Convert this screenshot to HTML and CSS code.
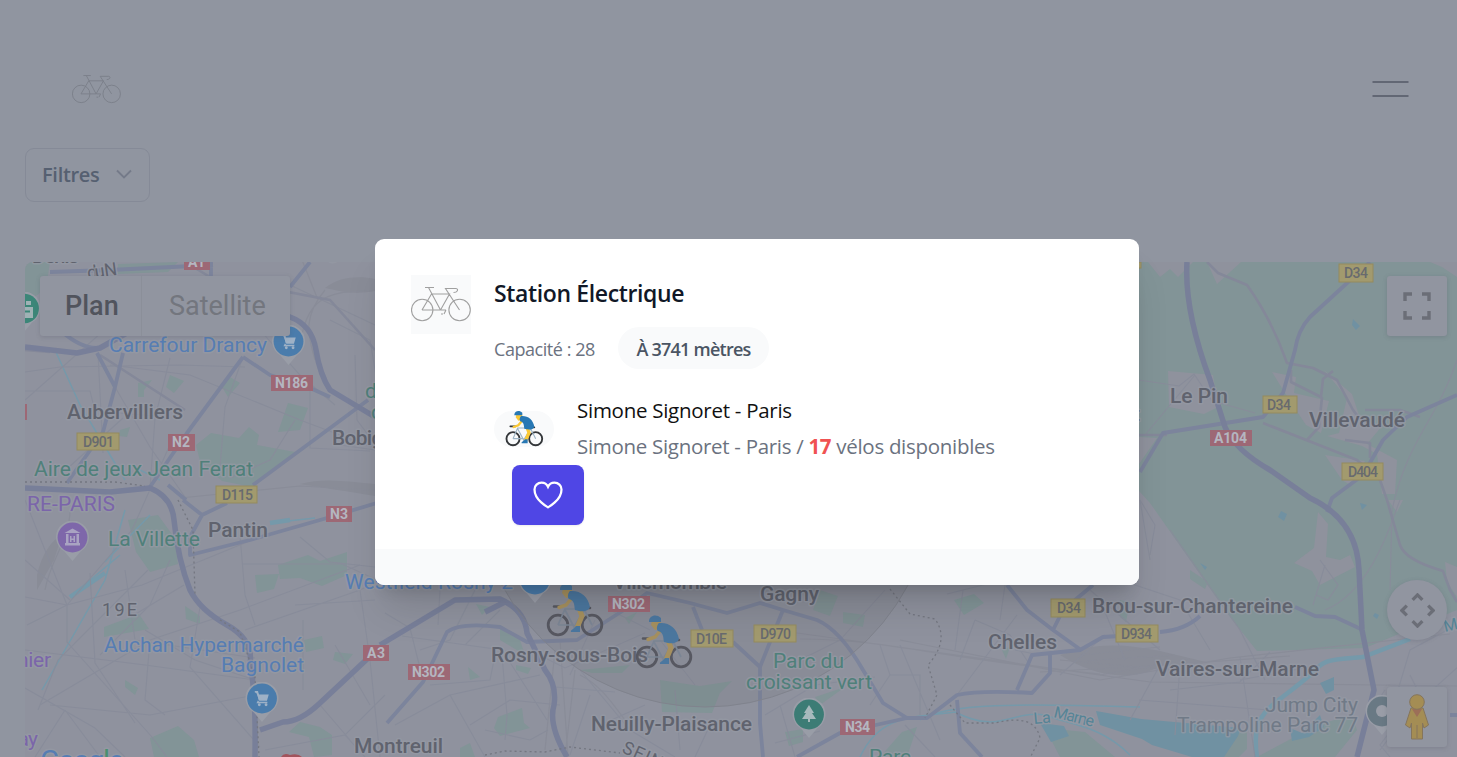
FILE: index.html
```html
<!DOCTYPE html>
<html lang="fr">
<head>
<meta charset="utf-8">
<title>Stations</title>
<link rel="stylesheet" href="styles.css">
</head>
<body>
<svg class="defs" width="0" height="0" aria-hidden="true">
  <symbol id="bike" viewBox="0 0 60 36">
    <g fill="none" stroke="currentColor" stroke-width="1.1">
      <circle cx="11.2" cy="24" r="10.7"/><circle cx="48.6" cy="24" r="10.7"/>
      <path d="M11 24L20.500 8H38.500L29.500 24H11M29.500 24L17.500 1.500M14 1.500H23M48.500 24L34.500 2.500H45C48 3 46.500 6.500 42.500 6.500M30 24h5M32 28h-2M35 24l-2 4"/>
    </g>
  </symbol>
  <symbol id="rider" viewBox="0 0 60 60">
    <g fill="none" stroke="var(--tyre)" stroke-width="2.800"><circle cx="12" cy="43" r="9.800"/><circle cx="46" cy="43" r="9.800"/></g>
    <path d="M12 43L19 27H38L46 43M38 29L28 45L19 28M12 43H28" fill="none" stroke="var(--frame)" stroke-width="1.700"/>
    <path d="M8 24.500h8M35 26h9" stroke="var(--tyre)" stroke-width="2.600" stroke-linecap="round"/>
    <path d="M17 7h9l-1 8-5 1-4-5z" fill="var(--skin)"/>
    <path d="M25 17L20 23L13 25.500" fill="none" stroke="var(--skin)" stroke-width="3.500" stroke-linecap="round"/>
    <path d="M33 26L36 34L31 46" fill="none" stroke="var(--skin)" stroke-width="5"/>
    <path d="M24 9C34 8 42 14 44 25C42 30 36 30 29 28C28 23 29 19 23 17C21 15 22 11 24 9Z" fill="var(--shirt)"/>
    <path d="M14 7C14 2 21-1 26 4L26 8L14 8Z" fill="var(--shirt)"/>
    <path d="M34 44v6h-9c-1-2 3-3 5-6z" fill="var(--shirt)"/>
  </symbol>
  <symbol id="pin" viewBox="0 0 34 42">
    <path d="M17 40L9 30.500A16.500 16.500 0 1 1 25 30.500Z" fill="#999da7"/>
    <circle cx="17" cy="16.500" r="14.900" fill="currentColor"/>
  </symbol>
  <symbol id="cart" viewBox="0 0 20 20">
    <path d="M2 3h3l1.500 3h11l-2 7H7L4 5" fill="#9eb1c6"/><path d="M6 13l-1 2h11M2 3h3l2 9" fill="none" stroke="#9eb1c6" stroke-width="1.500"/>
    <circle cx="7" cy="17.500" r="1.600" fill="#9eb1c6"/><circle cx="14.500" cy="17.500" r="1.600" fill="#9eb1c6"/>
  </symbol>
</svg>

<div class="page">
  <header class="header">
    <svg class="brand"><use href="#bike"/></svg>
    <svg class="menu" viewBox="0 0 38 18"><path d="M1.500 2h36M1.500 16h36"/></svg>
  </header>
  <div class="toolbar">
    <button class="filter"><span>Filtres</span><svg class="chevron" viewBox="0 0 16 10"><path d="M1 1.500l7 7 7-7"/></svg></button>
  </div>
  <main class="map">
    <svg class="canvas" viewBox="25 262 1432 495" preserveAspectRatio="none">
      <g class="park">
        <path d="M1120 262H1457V610L1365 648L1257 651L1230 617L1150 503L1120 470Z"/>
        <path d="M25 262h25l-3 20-8 12-14 8zM118 264l60-2-10 10-50 2zM196 445l15-12 28 5 10-11 10 8-2 10 38 7-18 15-25 20-30-6-22-20zM288 403l20 5-8 22-22 2zM170 375l14 6-10 12-8-6zM228 376l12 7-12 14-6-10zM138 383l14-3-8 10v7h-6zM120 430l10-3-3 10-8-1z"/>
        <path d="M128 520l30-5 16 22 4 27-28 8-14-20zM104 627l35-13 10 15-45 8zM185 606l15 10v8l-14-5zM278 565l30-10 12 6 27-9v23l-25 11-22-8-20 1zM255 575l24-1-5 15-17 4zM304 640l18-4 2 12-18 4zM335 652l18 2-8 10-12-4zM125 680l13 8-3 7-10-8zM150 738l28-12 16 14 5 17h-45zM300 722l20 5 12 8v20l-18 2-5-20-20-5z"/>
        <path d="M500 625l20 15 5 15-25-15zM498 717l24-9 2 15 6 5-30 8-6-8zM468 667l12 10-10 3zM516 665l15 3-3 6-12-4zM580 670l50-5-8 8h-30zM660 680l40 6 32-5-12 12-8 20-50-1zM460 748l10-5 5 14h-15zM476 604l14 3-8 8zM625 618l12-6-8 12z"/>
        <path d="M820 590l18 6-8 20-17-6zM843 612l22 3-2 12-20-4zM954 600l20-6 10 9-20 12zM1002 650l8-3-4 12zM785 732l18-3v13l-14 4zM880 757l22-25 15-5-10 30zM1045 728l40 4 30 25h-55zM815 697l30-10-25 18zM1120 600l10 2-4 20-6-5zM1190 570l18 12-3 7-15-10z"/>
        <path d="M1220 757l12-20 15-8 0 20-8 8zM1257 757l60-32 35-10 5 15-22 27z"/>
      </g>
      <g class="town">
        <path d="M1148 262h45l-15 15-8-8-10 8zM1207 262h34l-24 22zM1430 262h27v15l-15-10z"/>
        <path d="M1168 371l45 4 5 32-14 7-35-7zM1272 372l24 5-2 16 35 8-8 32-15-8-16-24zM1324 370l28 24 8 24 22 8-15 18 30 16-2 34h-13l-5-40-15-8-35-10 12-3 8-35zM1325 455l40 6-13 25-10-6zM1139 437l18 1-18 26zM1318 512l10 12-2 33 14 3 10-5 5 12-35 18-8-14-18-8 20-15zM1388 500h15l-6 12zM1445 562l12 5v30l-10-15z"/>
      </g>
      <g class="yard">
        <path d="M325 288c15-12 35-12 50-9v12c-20 4-35 0-50-3zM300 484c25-7 50-2 75 0v12c-30-5-50-8-75-12zM37 575c5-22 15-35 25-40l-8 25-17 30z"/>
        <path d="M1060 655c35-12 60-12 100-4l50 12-50 3c-30 18-70 8-100-11z"/>
      </g>
      <g class="rail">
        <path d="M790 632l360 50 307 4M800 639c90 0 140 20 300 35M900 640l200 40 130-22 220-24M1040 672l110-6 140-10M318 300l-20-50M300 350c5-70 50-55 75-60M325 290c-25 30-15 50-10 70M45 590c5-30 25-50 25-80M180 498l120-12 90 5M575 670l-10 87M560 640l8 117"/>
        <path d="M555 650l-10 100M580 675c20 10 30 25 45 45M1080 655l80-8M1085 661l90-6M1060 660l110 10M1100 675l90-16"/>
      </g>
      <g class="water">
        <path d="M55 350L80 405L125 480M125 510L105 580L42 690M150 515l-45 47M70 597l50-42M270 523l45-5M130 465l30 15" class="thin"/>
        <path d="M70 597L105 573M270 523L290 520M1410 639L1363 657C1330 660 1325 658 1310 675C1270 710 1250 710 1257 757"/>
        <path d="M860 757C880 715 910 718 955 712C1000 735 1010 710 1045 715C1070 725 1100 725 1130 755M920 720C950 700 1050 705 1140 707" class="thin"/>
        <path class="lake" d="M1040 723l24 3 5 10-18 6zM1096 711l45 8 100 9-3 8-14 21h-32l-40-12-10-6-42-14zM1320 683l14-6v13l-8 4zM1290 728l12 5 18-18 4 12-15 10-17 4zM1353 319l7 7-4 4-4-5z"/>
        <path class="lake" d="M1281 511l6 3-3 7-6-4zM1360 503l7 2-5 5zM1375 613l4 2-2 4-4-3zM1200 563l7 4-2 3z"/>
      </g>
      <g class="street">
        <path d="M25 372L60 367L180 365L245 367M25 391h65l5 20 60 5M98 353l5 100M110 365l80 10 110 45 80 30M170 358l-15 60-5 70M115 387l35 60 35 50M123 418l-55 50M25 400l85-75M220 285l80 90 35 30M330 320l40 20 10 60M355 355l2 65 30 40M340 445l35 5M290 285l85 40M310 388v60l60 3M295 420l-25 40-40 18M243 357l-18 50-5 60"/>
        <path d="M25 597l42 8 75-20 110-45M67 605v37l85 95 15 20M67 605l65-75 40-90M67 605L25 500M67 605l-40 20M90 573l5 90 40 60M25 688l70 40 30 29M40 705L150 640l90-30 120-45M25 650l120 15 110 15M38 710l20-50 90-90M65 710l-30 47M65 710l35 47M100 655l50-50 20-45M125 570l10 70 120 18M184 585l-50 30M150 640l-5 60 20 15M25 560l45 40M50 705l100 10 105-20"/>
        <path d="M240 535l5 60 10 30M242 564h100l33 15M200 607l-10 60 70 80M245 630l115-40 20-10M255 680l-60-20-50-30M300 537l30 25 45 5M360 590l10 70 10 97M375 600l-80 5M265 750l80-15 40-40M345 735l20 22M320 705l30 35M303 620v70M335 645l35 60"/>
        <path d="M385 613l25 15 10 40M402 636l100 14 45 70M420 650l30-10 25-50M440 590l-2 35M465 645l35-35M502 655l5 60-2 25M395 725l55-30 90-20M450 695l35 62M485 730l45 10 18-10M535 653l30 15 80-35M555 687l60 5M570 675l25-55M580 670l50 60 45 27M590 695l-20 60M660 640l35 45M675 690l5 60M710 725l-15 32M610 610l40 20M600 725l45-20M430 685l60-5 5-25M470 725l40-25 50 5"/>
        <path d="M765 715l50-30 60-8M780 705l15 52M775 743l45-12M790 665l50-25 45-50M880 645l10 30-20 30M900 645l40 95M890 675h30v40M905 725l30 32M947 594l60-15M955 650l8-60M975 620l-15 40M975 620l35 15 20 30M957 695l60-80M1000 620l5-35M1015 650l25 5M1100 600l25 60M1060 675l45-40M1090 590l70 60M1160 665l-30 55M1180 665l-5 70M1210 650l-30-50-60-20M1240 657l15 100M1265 680l-25-50-70-100M1240 680l80-15M1170 690l70-8 30-30M1139 700l130 10M1320 560l18 25-10 15-12-5M1325 565l-12 40M1150 560l-10-60 15 25-5 30"/>
        <path d="M1139 380l40 6 15-12 20 30M1195 375l-50 60M1220 403l35 10M1457 360c-20 60-50 80-65 150L1390 590M1400 500c-5 10-25 90-75 110M1395 700l15-50 47-25M1410 675l15 30M1380 750l30-40 50-45M1410 705l-30 40 10 12M1385 690l-20 30"/>
      </g>
      <g class="road minor">
        <path d="M1207 262L1218 273L1247 285Q1272 320 1287 363L1313 368L1337 380L1353 410Q1360 420 1367 422M1291 370v12l30 15 2-18 10-8M1322 397l-3 30-12 13M1139 435h28M1263 423L1357 460 1380 480 1387 500L1400 545Q1405 560 1443 571L1450 590 1457 602M1365 410h35l20 7"/>
        <path d="M25 350L50 352M185 262L210 277 330 300 375 350M100 355L185 410M1345 440l25 3v15"/>
      </g>
      <g class="road">
        <path d="M50 272L110 270 213 265M211 262v35M310 262L290 287M97 353L115 387L123 353M115 387L103 432 67 483M243 357L187 433 150 487M243 357L270 375 310 388 330 397M368 400L253 485M60 330Q80 348 97 348M183 500L202 515 227 503M202 515L190 537V555L250 540 327 518 380 502M168 485l18 15"/>
        <path d="M387 723L423 682L447 632Q460 622 500 627L527 642 577 640 627 608 647 593 690 603 727 613 760 603 783 610 817 620Q840 630 863 670L883 703 907 718H927L957 695Q980 690 1032 693L1050 673V655M1017 690L1032 655 1080 650 1103 637 1120 636M693 607L702 630M733 642L760 667V723L763 757M783 610L770 642 760 667M1007 585L1027 610 1053 630 1063 610 1093 585M1053 630l28 20M907 718L840 733 797 757M957 700L960 733 982 757M1160 632Q1185 630 1200 616"/>
        <path d="M1370 262L1310 317Q1298 330 1295 350L1283 393 1263 417 1163 433 1140 472M1457 395L1407 417 1383 440 1363 475 1332 498 1327 512M1295 607L1315 616 1335 617 1363 630M1450 715h7"/>
      </g>
      <g class="road major">
        <path d="M25 347L77 353 100 348 150 320 260 305 290 317Q312 325 316 350T330 390L380 420M25 488L110 492 150 488Q172 497 174 520Q178 560 190 590Q200 610 227 625T250 665Q256 690 255 757M380 647L320 703Q300 722 283 722L260 730M380 645L400 633 455 600 500 599Q525 610 527 633L545 670Q557 685 554 705Q548 725 567 757"/>
        <path d="M1187 262Q1184 310 1210 380L1225 427Q1235 450 1270 470L1310 498Q1357 520 1359 570L1362 630 1374 690 1357 757M505 602l-20 10"/>
      </g>
      <path class="border" d="M25 482h90l30 4M178 500l15 30 2 65M220 620l20 12 15 45 4 80M890 589l20 25 25 5Q950 640 928 665L937 695 925 718M950 705l15 18h30q40-10 45 15l-10 20M485 755l20-4 40 1 25-5 50 6"/>
      <circle class="radius" cx="705" cy="477" r="230"/>

      <g class="badge yellow">
        <rect x="77" y="433" width="42" height="17"/><rect x="216" y="486" width="41" height="17"/><rect x="691" y="630" width="42" height="17"/><rect x="754" y="625" width="42" height="17"/><rect x="1051" y="599" width="34" height="18"/><rect x="1116" y="625" width="42" height="17"/><rect x="1339" y="264" width="34" height="18"/><rect x="1263" y="396" width="34" height="17"/><rect x="1342" y="463" width="41" height="17"/><rect x="1120" y="262" width="21" height="6"/>
        <text x="83" y="447" textLength="31">D901</text><text x="222" y="500" textLength="31">D115</text><text x="696" y="644" textLength="31">D10E</text><text x="760" y="639" textLength="31">D970</text><text x="1057" y="613" textLength="24">D34</text><text x="1121" y="639" textLength="31">D934</text><text x="1344" y="278" textLength="24">D34</text><text x="1267" y="410" textLength="24">D34</text><text x="1348" y="477" textLength="30">D404</text>
      </g>
      <g class="badge red">
        <rect x="184" y="256" width="26" height="14"/><rect x="271" y="375" width="42" height="16"/><rect x="168" y="434" width="27" height="17"/><rect x="326" y="506" width="26" height="16"/><rect x="363" y="645" width="26" height="16"/><rect x="408" y="664" width="42" height="16"/><rect x="608" y="596" width="42" height="16"/><rect x="840" y="719" width="35" height="16"/><rect x="1210" y="430" width="42" height="16"/><rect x="20" y="404" width="7" height="16"/>
        <text x="188" y="267" textLength="17">A1</text><text x="275" y="388" textLength="33">N186</text><text x="172" y="447" textLength="18">N2</text><text x="330" y="519" textLength="18">N3</text><text x="367" y="658" textLength="18">A3</text><text x="412" y="677" textLength="33">N302</text><text x="612" y="609" textLength="33">N302</text><text x="845" y="732" textLength="25">N34</text><text x="1214" y="443" textLength="33">A104</text>
      </g>

      <g class="label city">
        <text x="32" y="263" textLength="47">Denis</text><text x="327" y="258" textLength="12">g</text>
        <text x="67" y="419" textLength="116">Aubervilliers</text><text x="332" y="445" textLength="72">Bobigny</text><text x="208" y="537" textLength="60">Pantin</text><text x="354" y="753" textLength="89">Montreuil</text><text x="491" y="662" textLength="157">Rosny-sous-Bois</text><text x="591" y="731" textLength="161">Neuilly-Plaisance</text><text x="613" y="589" textLength="114">Villemomble</text><text x="760" y="601" textLength="59">Gagny</text><text x="988" y="649" textLength="69">Chelles</text><text x="1092" y="613" textLength="201">Brou-sur-Chantereine</text><text x="1156" y="676" textLength="163">Vaires-sur-Marne</text><text x="1170" y="403" textLength="58">Le Pin</text><text x="1309" y="427" textLength="96">Villevaudé</text><text x="1133" y="421">t</text>
        <text x="102" y="616" textLength="35" class="small">19E</text><text class="small" transform="translate(621 752) rotate(24)" textLength="54">SEINE</text><text class="small" transform="translate(88 279) rotate(-8)" textLength="30">du N</text>
      </g>
      <g class="label nature">
        <text x="34" y="476" textLength="219">Aire de jeux Jean Ferrat</text><text x="108" y="546" textLength="92">La Villette</text><text x="773" y="668" textLength="71">Parc du</text><text x="746" y="689" textLength="126">croissant vert</text><text x="869" y="764" textLength="42">Parc</text><text x="365" y="398" textLength="30">des</text><text x="371" y="419">de</text>
      </g>
      <g class="label shop">
        <text x="109" y="352" textLength="158">Carrefour Drancy</text><text x="104" y="652" textLength="200">Auchan Hypermarché</text><text x="221" y="672" textLength="83">Bagnolet</text><text x="345" y="589" textLength="168">Westfield Rosny 2</text><text x="40" y="771" textLength="84" class="google">Goog<tspan class="google-l">l</tspan>e</text>
      </g>
      <g class="label museum"><text x="27" y="511" textLength="88">RE-PARIS</text><text x="17" y="667" textLength="34">nier</text><text x="13" y="746" textLength="25">lay</text></g>
      <g class="label leisure"><text x="1265" y="712" textLength="93">Jump City</text><text x="1177" y="732" textLength="181">Trampoline Parc 77</text></g>
      <g class="label river"><text transform="translate(1034 724) rotate(-5)">La</text><text transform="translate(1053 717) rotate(14)" textLength="41">Marne</text><text transform="translate(1445 632) rotate(-14)">Ma</text></g>

      <g color="#4a7cac"><use href="#pin" x="271.500" y="325" width="34" height="42"/><use href="#pin" x="245" y="682" width="34" height="42"/><use href="#pin" x="518" y="563" width="34" height="42"/></g>
      <use href="#cart" x="280" y="332" width="18" height="18"/><use href="#cart" x="253" y="689" width="18" height="18"/>
      <use href="#pin" x="55.500" y="521" width="34" height="42" color="#7e67aa"/>
      <path d="M72.500 528.500l8 4.500h-16zM65 543h15v2.500h-15zM66 534h2.500v9h-2.500zM76.500 534h2.500v9h-2.500zM70 536h1.500v6h-1.500zM73.500 536h1.500v6h-1.500zM71 538.500h3v1.500h-3z" fill="#a9a3c2"/>
      <use href="#pin" x="792" y="698" width="34" height="42" color="#3c7c75"/><path d="M809 705l5 8h-2l4 6h-6v3h-2v-3h-6l4-6h-2z" fill="#a7b9bc"/>
      <use href="#pin" x="7" y="292" width="34" height="42" color="#3c8678"/><path d="M24 307h9v11h-9zM26 301h5v4h-5z" fill="#9fb2b5"/><path d="M24 311.500h6" stroke="#3c8678" stroke-width="2"/>
      <use href="#pin" x="1365" y="695" width="34" height="42" color="#697984"/><circle cx="1382" cy="711" r="6" fill="#999da7"/>
      <path d="M292 765l-11-8q3-5 9-2q8-2 12 2z" fill="#a2535c"/>
      <g class="riders"><use href="#rider" x="546" y="582" width="60" height="60"/><use href="#rider" x="635" y="614" width="60" height="60"/></g>
    </svg>
    <div class="maptype"><span class="active">Plan</span><span>Satellite</span></div>
    <div class="control full"><svg viewBox="0 0 28 28"><path d="M2 9V2h7M19 2h7v7M26 19v7h-7M9 26H2v-7"/></svg></div>
    <div class="control move"><svg viewBox="0 0 36 36"><path d="M13 7l5-5 5 5M13 29l5 5 5-5M7 13l-5 5 5 5M29 13l5 5-5 5"/></svg></div>
    <div class="control pegman"><svg viewBox="0 0 26 46"><path d="M7 14L1.500 31l4.500 3 1.500-5v16h11V29l1.500 5 4.500-3-5.500-17z" fill="#a48d54" stroke="#85755c"/><path d="M8 15l5 8 5-8z" fill="#9c6f58"/><circle cx="13" cy="8" r="7.300" fill="#a48d54" stroke="#85755c"/><path d="M13 31v13" stroke="#85755c"/></svg></div>
  </main>
</div>

<section class="modal" role="dialog">
  <div class="body">
    <div class="thumb"><svg><use href="#bike"/></svg></div>
    <div class="info">
      <h2>Station Électrique</h2>
      <div class="meta"><span class="capacity">Capacité : 28</span><span class="pill">À 3741 mètres</span></div>
      <div class="station">
        <div class="avatar"><svg><use href="#rider"/></svg></div>
        <div class="lines"><p class="name">Simone Signoret - Paris</p><p class="detail">Simone Signoret - Paris / <b>17</b> vélos disponibles</p></div>
      </div>
      <button class="like"><svg viewBox="0 0 24 24"><path d="M21 8.250c0-2.485-2.099-4.500-4.688-4.500-1.935 0-3.597 1.126-4.312 2.733-.715-1.607-2.377-2.733-4.313-2.733C5.100 3.750 3 5.765 3 8.250c0 7.220 9 12 9 12s9-4.780 9-12z"/></svg></button>
    </div>
  </div>
  <div class="footer"></div>
</section>
</body>
</html>
```
FILE: styles.css
```css
* { box-sizing: border-box; }
body { margin: 0; width: 1457px; height: 757px; overflow: hidden; background: #9095a0; font-family: "Open Sans", "Noto Sans", sans-serif; }
button { font: inherit; border: 0; background: none; padding: 0; }
p, h2 { margin: 0; font-weight: 400; }
.defs { position: absolute; }
.page { height: 757px; display: flex; flex-direction: column; }
.header { height: 148px; padding: 29px 48px 0 72px; display: flex; align-items: center; justify-content: space-between; }
.brand { width: 49px; height: 30px; color: #7a7e89; }
.menu { width: 38px; height: 18px; }
.menu path { stroke: #626774; stroke-width: 2.200; fill: none; }
.toolbar { height: 114px; padding-left: 25px; }
.filter { width: 125px; height: 54px; border: 1.500px solid #858a97; border-radius: 9px; display: flex; align-items: center; padding: 0 0 2px 16px; gap: 16px; color: #566071; font-size: 20px; font-weight: 600; }
.filter span { letter-spacing: -.3px; white-space: nowrap; }
.chevron { width: 16px; height: 10px; }
.chevron path { fill: none; stroke: #747a89; stroke-width: 1.900; }

.map { position: relative; flex: 1; margin-left: 25px; overflow: hidden; border-top-left-radius: 8px; background: #8f929e; }
.canvas { display: block; width: 1432px; height: 495px; }
.park { fill: #829497; }
.town { fill: #8f929d; }
.yard { fill: #898c97; }
.rail { fill: none; stroke: #898c98; stroke-width: 1.200; }
.water path { fill: none; stroke: #7599aa; stroke-width: 4.500; }
.water .thin { stroke-width: 1.500; }
.water .lake { fill: #7091a2; stroke: none; }
.street { fill: none; stroke: #888c9a; stroke-width: 1.100; }
.road { fill: none; stroke: #7c849c; stroke-width: 3.800; stroke-linejoin: round; }
.road.minor { stroke: #848899; stroke-width: 2.600; }
.road.major { stroke: #787f99; stroke-width: 5.500; }
.border { fill: none; stroke: #747781; stroke-width: 1.300; stroke-dasharray: 2 3; }
.radius { fill: rgba(105, 105, 110, .14); stroke: #80838d; stroke-width: 1; }
.badge text { font: 500 14px Roboto, sans-serif; }
.yellow rect { fill: #a29a6e; stroke: #948a5e; }
.yellow text { fill: #686a6e; }
.red rect { fill: #9d6875; }
.red text { fill: #b4b6c0; font-weight: 700; }
.label { font: 400 21px Roboto, sans-serif; stroke: rgba(150, 154, 165, .7); stroke-width: 3px; paint-order: stroke; stroke-linejoin: round; }
.city { fill: #60636e; font-weight: 500; }
.small { font-size: 18px; font-weight: 400; }
.nature { fill: #4f807a; }
.shop { fill: #567db3; }
.museum { fill: #7b65aa; }
.leisure { fill: #707a87; }
.river { fill: #558496; font-size: 16px; }
.google { font-size: 29px; }
.google-l { fill: #4b8f70; }
.riders { --tyre: #575861; --frame: #7b8594; --skin: #a6905e; --shirt: #4b779f; }

.maptype { position: absolute; left: 15px; top: 14px; width: 250px; height: 60px; display: flex; align-items: center; background: #9195a0; border-radius: 3px; box-shadow: 0 1px 4px rgba(75, 80, 94, .25); font: 400 27px Roboto, sans-serif; color: #73767e; }
.maptype span { height: 60px; line-height: 60px; padding-left: 27px; }
.maptype .active { width: 102px; padding-left: 25px; border-right: 1px solid #8b8f99; font-weight: 500; color: #51545d; }
.control { position: absolute; width: 60px; height: 60px; right: 10px; display: flex; align-items: center; justify-content: center; background: #9195a0; border-radius: 3px; box-shadow: 0 1px 4px rgba(75, 80, 94, .25); }
.control svg { display: block; }
.full { top: 14px; }
.full svg { width: 28px; height: 28px; }
.move { top: 318px; border-radius: 50%; }
.move svg { width: 35px; height: 35px; }
.full path, .move path { fill: none; stroke: #6b6e77; stroke-width: 3.400; }
.pegman { top: 425px; }
.pegman svg { width: 26px; height: 46px; }

.modal { position: absolute; left: 375px; top: 238.500px; width: 763.500px; height: 346px; border-radius: 9px; overflow: hidden; background: #fff; display: flex; flex-direction: column; box-shadow: 0 30px 38px -8px rgba(0, 0, 0, .13), 0 12px 15px -9px rgba(0, 0, 0, .16); }
.body { height: 310px; padding: 36px 36px 24px; display: flex; gap: 23px; }
.thumb { width: 60px; height: 59px; background: #f9fafb; display: flex; align-items: center; }
.thumb svg { width: 60px; height: 36px; color: #a0a0a0; }
.info { flex: 1; display: flex; flex-direction: column; align-items: flex-start; white-space: nowrap; }
h2 { height: 53px; line-height: 36px; font-size: 23px; font-weight: 600; color: #111827; letter-spacing: -.37px; }
.meta { height: 42px; display: flex; align-items: center; gap: 23px; }
.capacity { width: 101px; padding-top: 2px; font-size: 18px; color: #6b7280; letter-spacing: -.45px; }
.pill { width: 151px; height: 42px; line-height: 44px; border-radius: 21px; background: #f9fafb; text-align: center; font-size: 18px; font-weight: 600; color: #4b5563; letter-spacing: -.75px; }
.station { margin-top: 24px; height: 72px; display: flex; gap: 23px; align-items: center; }
.avatar { width: 60px; height: 36px; border-radius: 18px; background: #f9fafb; display: flex; justify-content: center; align-items: center; --tyre: #333639; --frame: #9cb4c5; --skin: #fbc936; --shirt: #2878b4; }
.avatar svg { width: 40px; height: 40px; margin: 3px 0 0 2px; flex-shrink: 0; }
.lines { line-height: 36px; font-size: 20.500px; color: #6b7280; padding-bottom: 1px; }
.name { color: #111; letter-spacing: -.27px; }
.detail { letter-spacing: -.3px; }
.detail b { color: #f05252; font-weight: 700; }
.like { margin: 0 0 0 18px; width: 72px; height: 60px; flex-shrink: 0; border-radius: 8px; background: #4f46e5; display: flex; align-items: center; justify-content: center; box-shadow: 0 1px 2px rgba(0, 0, 0, .08); }
.like svg { width: 36px; height: 36px; }
.like path { fill: none; stroke: #fff; stroke-width: 1.500; }
.footer { flex: 1; background: #f9fafb; }
```
